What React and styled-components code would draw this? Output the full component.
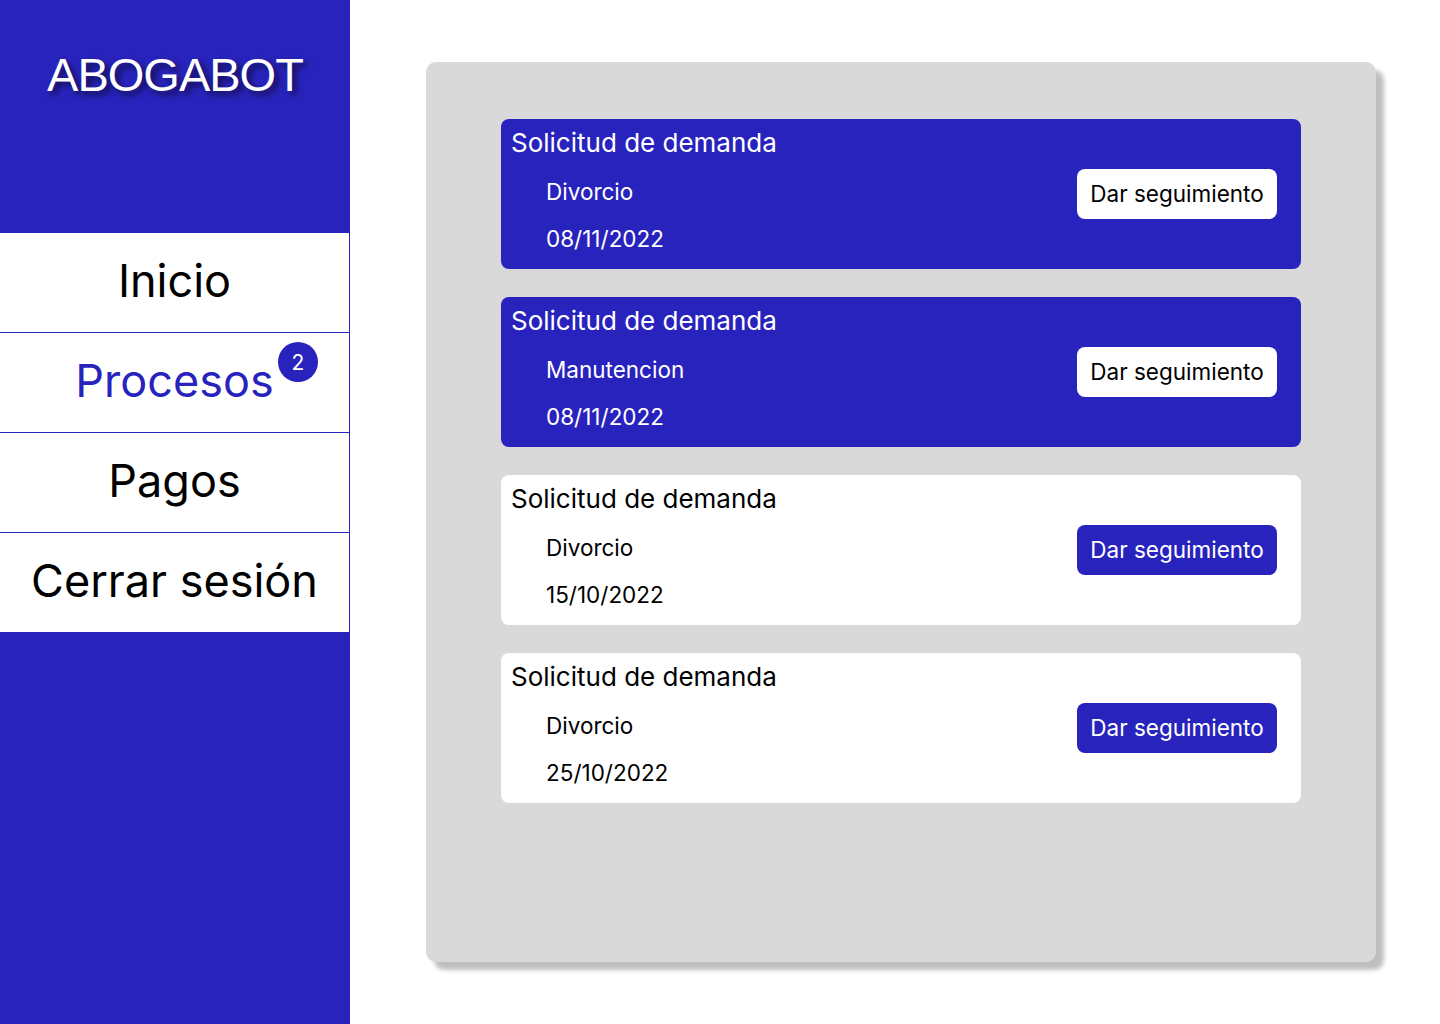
import React from "react";
import styled, { createGlobalStyle } from "styled-components";

const BLUE = "#2923bd";

const GlobalStyle = createGlobalStyle`
    html, body {
        margin: 0;
        padding: 0;
        background: #ffffff;
        font-family: Inter, "Noto Sans", sans-serif;
    }
`;

const Page = styled.div`
    display: flex;
    width: 1440px;
    height: 1024px;
    overflow: hidden;
`;

const Sidebar = styled.aside`
    width: 350px;
    flex-shrink: 0;
    background: ${BLUE};
    display: flex;
    flex-direction: column;
`;

const Brand = styled.div`
    height: 233px;
    box-sizing: border-box;
    padding-top: 47px;
    text-align: center;
    color: #ffffff;
    font-family: "Liberation Sans", Arial, sans-serif;
    font-size: 47px;
    letter-spacing: -1px;
    line-height: 56px;
    text-shadow: 4px 4px 6px rgba(0, 0, 0, 0.65);
`;

const NavItem = styled.div`
    position: relative;
    width: 349px;
    height: 100px;
    box-sizing: border-box;
    padding-bottom: 5px;
    background: #ffffff;
    border-bottom: 1px solid ${BLUE};
    display: flex;
    align-items: center;
    justify-content: center;
    font-size: 45px;
    color: ${(p) => (p.active ? BLUE : "#000000")};
`;

const Badge = styled.span`
    position: absolute;
    top: 9px;
    left: 278px;
    width: 40px;
    height: 40px;
    border-radius: 50%;
    background: ${BLUE};
    color: #ffffff;
    font-size: 21px;
    display: flex;
    align-items: center;
    justify-content: center;
`;

const Main = styled.main`
    flex: 1;
    padding: 62px 0 0 76px;
`;

const Panel = styled.section`
    width: 950px;
    height: 900px;
    box-sizing: border-box;
    background: #d9d9d9;
    border-radius: 10px;
    box-shadow: 8px 8px 4px rgba(0, 0, 0, 0.25);
    padding: 57px 75px 0;
    display: flex;
    flex-direction: column;
    gap: 28px;
`;

const Card = styled.div`
    height: 150px;
    box-sizing: border-box;
    border-radius: 8px;
    background: ${(p) => (p.filled ? BLUE : "#ffffff")};
    color: ${(p) => (p.filled ? "#ffffff" : "#000000")};
    display: flex;
    align-items: center;
    justify-content: space-between;
    padding: 0 24px 0 10px;
`;

const Info = styled.div`
    align-self: flex-start;
    display: flex;
    flex-direction: column;
    padding-top: 8px;
`;

const Title = styled.div`
    font-size: 26px;
    line-height: 32px;
`;

const Detail = styled.div`
    font-size: 22.5px;
    line-height: 30px;
    margin: ${(p) => p.gap}px 0 0 35px;
`;

const Button = styled.button`
    width: 200px;
    height: 50px;
    padding: 0 0 2px;
    border: none;
    border-radius: 8px;
    font-family: inherit;
    font-size: 22.5px;
    background: ${(p) => (p.filled ? "#ffffff" : BLUE)};
    color: ${(p) => (p.filled ? "#000000" : "#ffffff")};
    cursor: pointer;
`;

const requests = [
    { type: "Divorcio", date: "08/11/2022", filled: true },
    { type: "Manutencion", date: "08/11/2022", filled: true },
    { type: "Divorcio", date: "15/10/2022", filled: false },
    { type: "Divorcio", date: "25/10/2022", filled: false },
];

export default function App() {
    return (
        <Page>
            <GlobalStyle />
            <Sidebar>
                <Brand>ABOGABOT</Brand>
                <NavItem>Inicio</NavItem>
                <NavItem active>
                    Procesos
                    <Badge>2</Badge>
                </NavItem>
                <NavItem>Pagos</NavItem>
                <NavItem>Cerrar sesión</NavItem>
            </Sidebar>
            <Main>
                <Panel>
                    {requests.map((req, index) => (
                        <Card key={index} filled={req.filled}>
                            <Info>
                                <Title>Solicitud de demanda</Title>
                                <Detail gap={18}>{req.type}</Detail>
                                <Detail gap={17}>{req.date}</Detail>
                            </Info>
                            <Button filled={req.filled}>Dar seguimiento</Button>
                        </Card>
                    ))}
                </Panel>
            </Main>
        </Page>
    );
}
